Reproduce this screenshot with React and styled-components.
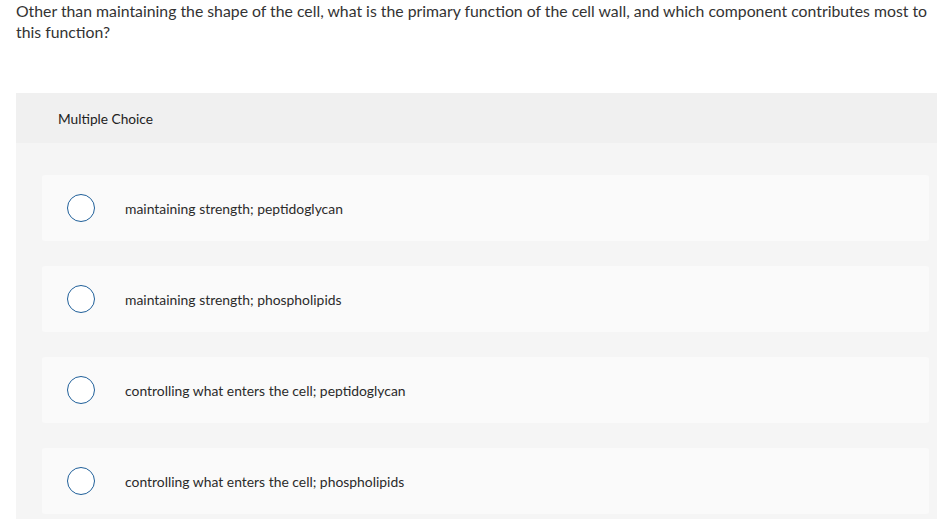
import React from 'react';
import styled, { createGlobalStyle } from 'styled-components';

const GlobalStyle = createGlobalStyle`
  html, body {
    margin: 0;
    padding: 0;
    background: #ffffff;
    font-family: Lato, "Open Sans", Arial, sans-serif;
    color: #333333;
    overflow: hidden;
  }
`;

const Page = styled.div`
  padding: 0 0 0 16px;
`;

const Question = styled.p`
  margin: 0 6px 0 0;
  font-size: 15.8px;
  line-height: 21px;
  color: #333333;
`;

const Panel = styled.section`
  margin-top: 51px;
  background: #f5f5f5;
`;

const PanelHeader = styled.div`
  height: 50px;
  display: flex;
  align-items: center;
  padding-left: 42px;
  background: #f0f0f0;
  font-size: 13.7px;
  color: #222222;
`;

const ChoiceList = styled.div`
  display: flex;
  flex-direction: column;
  gap: 25px;
  padding: 32px 8px 20px 26px;
`;

const Choice = styled.label`
  display: flex;
  align-items: center;
  height: 66px;
  padding-left: 25px;
  background: #fafafa;
  border-radius: 3px;
  cursor: pointer;
`;

const Radio = styled.span`
  box-sizing: border-box;
  width: 28px;
  height: 28px;
  border-radius: 50%;
  border: 1.5px solid #1f5f99;
  background: #ffffff;
  flex-shrink: 0;
`;

const ChoiceText = styled.span`
  margin-left: 30px;
  font-size: 13.9px;
  color: #2b2b2b;
`;

const choices = [
  'maintaining strength; peptidoglycan',
  'maintaining strength; phospholipids',
  'controlling what enters the cell; peptidoglycan',
  'controlling what enters the cell; phospholipids',
];

export default function App() {
  return (
    <Page>
      <GlobalStyle />
      <Question>
        Other than maintaining the shape of the cell, what is the primary function of the cell wall, and which component contributes most to this function?
      </Question>
      <Panel>
        <PanelHeader>Multiple Choice</PanelHeader>
        <ChoiceList>
          {choices.map((c) => (
            <Choice key={c}>
              <Radio />
              <ChoiceText>{c}</ChoiceText>
            </Choice>
          ))}
        </ChoiceList>
      </Panel>
    </Page>
  );
}
